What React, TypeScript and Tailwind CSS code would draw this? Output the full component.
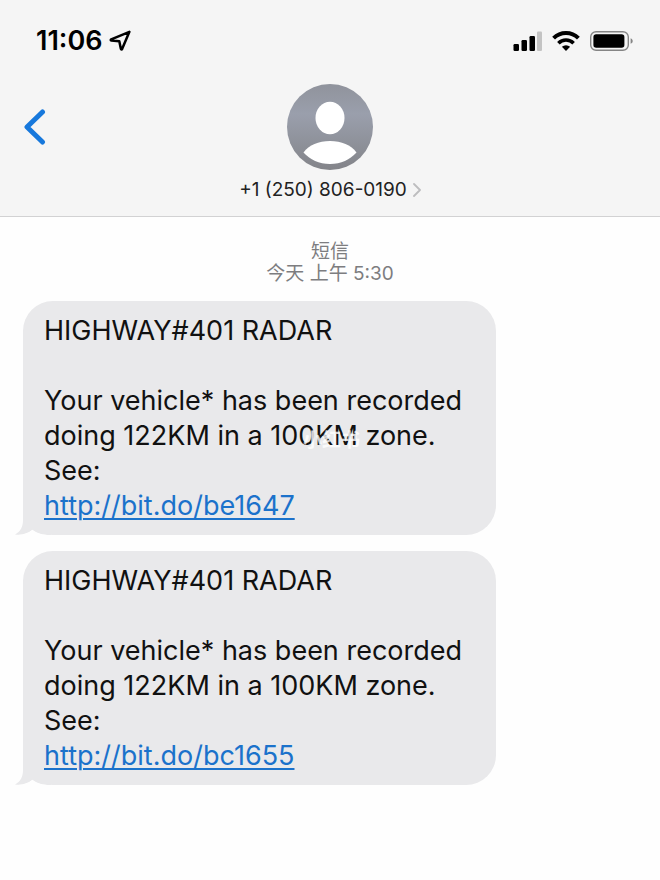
interface Message {
  id: number;
  title: string;
  body: string;
  link: string;
  watermark?: string;
}

const messages: Message[] = [
  {
    id: 1,
    title: "HIGHWAY#401 RADAR",
    body: "Your vehicle* has been recorded doing 122KM in a 100KM zone. See:",
    link: "http://bit.do/be1647",
    watermark: "小红书"
  },
  {
    id: 2,
    title: "HIGHWAY#401 RADAR",
    body: "Your vehicle* has been recorded doing 122KM in a 100KM zone. See:",
    link: "http://bit.do/bc1655"
  }
];

function StatusBar() {
  return (
    <div className="flex h-[82px] items-center justify-between pl-9 pr-[26px] text-black">
      <div className="flex items-center gap-[6px]">
        <span className="text-[27px] leading-8 font-semibold">11:06</span>
        <svg className="h-[22px] w-[22px]" viewBox="0 0 22 22" fill="none" aria-hidden="true">
          <path
            d="M20.4 1.800 2.200 9.400c-.7.4-.6 1 .1 1.100l8 .7 1.600 7.800c.2.7.9.7 1.200.1Z"
            stroke="currentColor"
            strokeWidth="2.5"
            strokeLinejoin="round"
          />
        </svg>
      </div>
      <div className="flex items-center gap-[10px]">
        {/* Signal */}
        <svg className="h-5 w-[30px]" viewBox="0 0 30 20" aria-hidden="true">
          <rect x="1.5" y="13" width="5.5" height="7" rx="1.2" fill="currentColor" />
          <rect x="9.500" y="9" width="5.5" height="11" rx="1.2" fill="currentColor" />
          <rect x="17.500" y="5" width="5.5" height="15" rx="1.2" fill="currentColor" />
          <rect x="25" y="0.5" width="5" height="19.5" rx="1" fill="#c4c4c4" />
        </svg>
        {/* Wi-Fi */}
        <svg className="h-5 w-7" viewBox="0 0 28 20" fill="none" aria-hidden="true">
          <path d="M1.6 7.2a17.6 17.6 0 0 1 24.8 0" stroke="currentColor" strokeWidth="4" />
          <path d="M6.4 12.2a10.8 10.8 0 0 1 15.2 0" stroke="currentColor" strokeWidth="3.6" />
          <path d="M14 20l-4.1-4.2a5.9 5.9 0 0 1 8.2 0Z" fill="currentColor" />
        </svg>
        {/* Battery */}
        <svg className="h-5 w-11" viewBox="0 0 44 20" fill="none" aria-hidden="true">
          <rect x="0.7" y="0.7" width="37.6" height="18.6" rx="5.4" stroke="#858585" strokeWidth="1.4" />
          <rect x="3.4" y="3.2" width="31" height="13.6" rx="2.8" fill="currentColor" />
          <path d="M40.6 7.2c2.8 1 2.8 4.6 0 5.6Z" fill="#858585" />
        </svg>
      </div>
    </div>
  );
}

function ChatHeader() {
  return (
    <header className="border-b border-[#d2d2d3] bg-[#f5f5f5]">
      <StatusBar />
      <div className="grid grid-cols-[1fr_auto_1fr] pt-0.5 pb-3">
        <button type="button" aria-label="返回" className="ml-6 h-[86px] w-[22px] text-[#1778dc]">
          <svg className="h-9 w-[22px]" viewBox="0 0 22 36" fill="none" aria-hidden="true">
            <path
              d="M18.500 3 3 18l15.500 15"
              stroke="currentColor"
              strokeWidth="5"
              strokeLinecap="round"
              strokeLinejoin="round"
            />
          </svg>
        </button>
        <button type="button" className="flex flex-col items-center gap-[6px]">
          <svg className="h-[86px] w-[86px]" viewBox="0 0 86 86" aria-hidden="true">
            <defs>
              <linearGradient id="avatar" x1="0" y1="0" x2="0" y2="1">
                <stop offset="0" stopColor="#90939c" />
                <stop offset="0.35" stopColor="#9a9fac" />
                <stop offset="1" stopColor="#838489" />
              </linearGradient>
            </defs>
            <circle cx="43" cy="43" r="43" fill="url(#avatar)" />
            <ellipse cx="43" cy="34" rx="14.5" ry="16.2" fill="#fff" />
            <path d="M16.5 68.5C22 61 31.500 57 43 57s21 4 26.500 11.500C63 75.500 54 80 43 80S23 75.500 16.500 68.500Z" fill="#fff" />
          </svg>
          <span className="flex items-center gap-[6px] text-[19px] leading-7 text-[#222]">
            +1 (250) 806-0190
            <svg className="h-[14px] w-2" viewBox="0 0 8 14" fill="none" aria-hidden="true">
              <path d="m1 1 6 6-6 6" stroke="#bdbdbf" strokeWidth="1.8" strokeLinecap="round" strokeLinejoin="round" />
            </svg>
          </span>
        </button>
      </div>
    </header>
  );
}

function MessageBubble({ message }: { message: Message }) {
  return (
    <li className="relative w-[77%] rounded-[30px] bg-[#e9e9eb] px-[21px] py-3 text-[27px] leading-[35px] text-[#111]">
      {/* Tail */}
      <svg className="absolute bottom-0 -left-2 h-8 w-9 text-[#e9e9eb]" viewBox="0 0 36 32" aria-hidden="true">
        <path d="M8 0v17c0 7-2.500 11.500-8 14.500 6 .8 12-.5 17-4.200 5 3.500 11 4.700 19 4.700V0Z" fill="currentColor" />
        <path d="M0 32c7 .3 12.500-1.200 17.500-5.200 4.500 3.400 9 4.700 14.500 5.200H0Z" fill="#fefefe" />
      </svg>
      <p>{message.title}</p>
      <p className="mt-[35px]">{message.body}</p>
      <a href={message.link} className="relative text-[#1b72cb] underline decoration-2 underline-offset-3">
        {message.link}
      </a>
      {message.watermark && (
        <span className="pointer-events-none absolute top-[126px] left-[280px] text-[19px] leading-7 font-bold text-white/80">
          {message.watermark}
        </span>
      )}
    </li>
  );
}

export default function App() {
  return (
    <div className="min-h-screen bg-[#fefefe] font-['Inter','Noto_Sans_CJK_SC',sans-serif]">
      <ChatHeader />
      <main className="pt-6 pb-24">
        <div className="text-center text-[19px] leading-[22px] text-[#7d7d80]">
          <p>短信</p>
          <p>今天 上午 5:30</p>
        </div>
        <ul className="mt-4 flex flex-col gap-4 px-[23px]">
          {messages.map((message) => (
            <MessageBubble key={message.id} message={message} />
          ))}
        </ul>
      </main>
    </div>
  );
}
